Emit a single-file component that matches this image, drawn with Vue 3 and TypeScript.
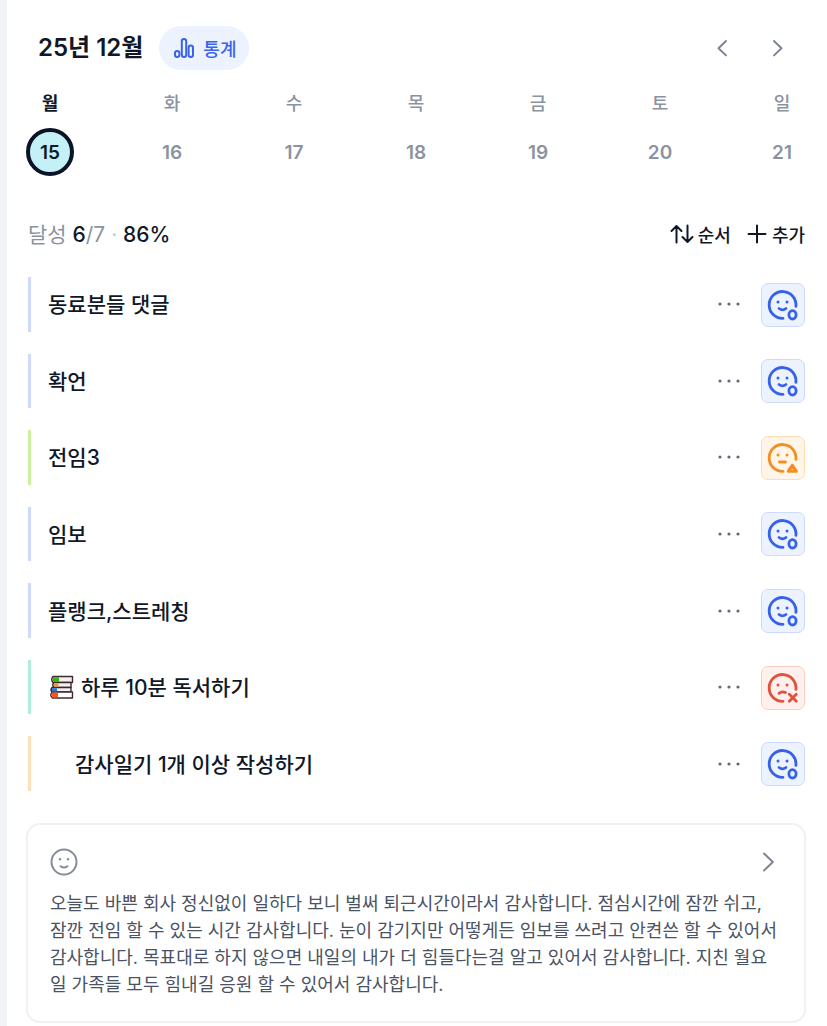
<script setup lang="ts">
type Mood = 'good' | 'soso' | 'bad'

interface Day {
  label: string
  date: number
  selected?: boolean
}

interface Habit {
  title: string
  tone: 'blue' | 'lime' | 'mint' | 'orange'
  mood: Mood
  books?: boolean
  indented?: boolean
}

const days: Day[] = [
  { label: '월', date: 15, selected: true },
  { label: '화', date: 16 },
  { label: '수', date: 17 },
  { label: '목', date: 18 },
  { label: '금', date: 19 },
  { label: '토', date: 20 },
  { label: '일', date: 21 },
]

const habits: Habit[] = [
  { title: '동료분들 댓글', tone: 'blue', mood: 'good' },
  { title: '확언', tone: 'blue', mood: 'good' },
  { title: '전임3', tone: 'lime', mood: 'soso' },
  { title: '임보', tone: 'blue', mood: 'good' },
  { title: '플랭크,스트레칭', tone: 'blue', mood: 'good' },
  { title: '하루 10분 독서하기', tone: 'mint', mood: 'bad', books: true },
  { title: '감사일기 1개 이상 작성하기', tone: 'orange', mood: 'good', indented: true },
]

const moodNames: Record<Mood, string> = { good: '달성', soso: '부분 달성', bad: '미달성' }
</script>

<template>
  <main class="page">
    <header class="top">
      <h1>25년 12월</h1>
      <button class="stats" type="button">
        <svg width="20" height="20" viewBox="0 0 20 20" fill="none" stroke="currentColor" stroke-width="2">
          <rect x="1" y="13" width="4.4" height="6" rx="2.2" />
          <rect x="7.8" y="1" width="4.4" height="18" rx="2.2" />
          <rect x="14.6" y="7.5" width="4.4" height="11.5" rx="2.2" />
        </svg>
        <span>통계</span>
      </button>
      <nav class="pager">
        <button type="button" aria-label="이전 주">
          <svg width="24" height="24" viewBox="0 0 24 24"><path d="M16 5 L8.5 12.2 L16 19.4" /></svg>
        </button>
        <button type="button" aria-label="다음 주">
          <svg width="24" height="24" viewBox="0 0 24 24"><path d="M8 5 L15.5 12.2 L8 19.4" /></svg>
        </button>
      </nav>
    </header>

    <div class="week">
      <button v-for="day in days" :key="day.date" type="button" class="day" :class="{ selected: day.selected }">
        <span class="name">{{ day.label }}</span>
        <span class="date">{{ day.date }}</span>
      </button>
    </div>

    <section class="summary">
      <p class="progress">달성 <b>6</b>/7 <i>·</i> <b>86%</b></p>
      <div class="actions">
        <button type="button">
          <svg width="24" height="22" viewBox="0 0 24 22"><path d="M6.5 19.5V3M1.5 8L6.5 3L11.5 8M17.5 2.5V19M12.5 14L17.5 19L22.5 14" /></svg>
          <span>순서</span>
        </button>
        <button type="button" class="add">
          <svg width="20" height="22" viewBox="0 0 20 22"><path d="M10 2.5V19.5M1.5 11H18.5" /></svg>
          <span>추가</span>
        </button>
      </div>
    </section>

    <ul class="habits">
      <li v-for="habit in habits" :key="habit.title" :class="habit.tone">
        <svg v-if="habit.books" class="books" width="25" height="24" viewBox="0 0 25 24">
          <g stroke="#40282c" stroke-width="1.4" stroke-linejoin="round">
            <path d="M4 1.5H23.5V7.5H4Q1.5 4.5 4 1.5Z" fill="#f2f0f0" />
            <path d="M5 7.5H22V12.5H5Q2.5 10 5 7.5Z" fill="#f2f0f0" />
            <path d="M3 12.5H22V17H3Q1 15 3 12.5Z" fill="#f2f0f0" />
            <path d="M3.5 17H23.5V23H3.5Q0 20 3.5 17Z" fill="#ffffff" />
          </g>
          <path d="M4 2.2H10V6.9H4Z" fill="#34b611" />
          <path d="M5 8.2H9.5V11.8H5Z" fill="#e8964b" />
          <path d="M3 13.2H8V16.4H3Z" fill="#2878e0" />
          <path d="M3 17.7H9V22.3H3Z" fill="#ff5417" />
        </svg>
        <span class="title" :class="{ indented: habit.indented }">{{ habit.title }}</span>
        <button class="more" type="button" :aria-label="habit.title + ' 더보기'">
          <svg width="24" height="6" viewBox="0 0 24 6" fill="#626b7b">
            <circle cx="3" cy="3" r="1.6" /><circle cx="12" cy="3" r="1.6" /><circle cx="21" cy="3" r="1.6" />
          </svg>
        </button>
        <button class="face" :class="habit.mood" type="button" :aria-label="moodNames[habit.mood]">
          <svg width="34" height="34" viewBox="0 -1 34 34" fill="none" stroke="currentColor" stroke-width="2.8" stroke-linecap="round">
            <path d="M29.9 17.4A13.4 13.4 0 1 0 17 29.3" />
            <circle cx="12" cy="13" r="1.5" fill="currentColor" stroke="none" />
            <circle cx="21" cy="13" r="1.5" fill="currentColor" stroke="none" />
            <template v-if="habit.mood === 'good'">
              <path d="M13 19.5Q16.500 22.200 20 19.5" />
              <ellipse cx="26.500" cy="25.800" rx="3.600" ry="4.200" />
            </template>
            <template v-else-if="habit.mood === 'soso'">
              <path d="M13.500 20H19.500" />
              <path d="M26.300 23.300L30.300 29.200H22.300Z" stroke-width="3" stroke-linejoin="round" />
            </template>
            <template v-else>
              <path d="M13 21.300Q16 18.800 19.500 20.500" />
              <path d="M23.300 22.300L30.300 29.300M30.300 22.300L23.300 29.300" />
            </template>
          </svg>
        </button>
      </li>
    </ul>

    <article class="diary">
      <header>
        <svg width="28" height="28" viewBox="0 0 28 28" fill="none" stroke="#858c99" stroke-width="2" stroke-linecap="round">
          <circle cx="14" cy="14" r="12.5" />
          <path d="M10.500 18.200Q14 20.800 17.500 18.200" />
          <circle cx="10" cy="11.200" r="1.200" fill="#858c99" stroke="none" />
          <circle cx="18" cy="11.200" r="1.200" fill="#858c99" stroke="none" />
        </svg>
        <button type="button" aria-label="일기 열기">
          <svg width="28" height="28" viewBox="0 0 28 28"><path d="M10 5.500L18.800 14L10 22.500" /></svg>
        </button>
      </header>
      <p>오늘도 바쁜 회사 정신없이 일하다 보니 벌써 퇴근시간이라서 감사합니다. 점심시간에 잠깐 쉬고, 잠깐 전임 할 수 있는 시간 감사합니다. 눈이 감기지만 어떻게든 임보를 쓰려고 안켠쓴 할 수 있어서 감사합니다. 목표대로 하지 않으면 내일의 내가 더 힘들다는걸 알고 있어서 감사합니다. 지친 월요일 가족들 모두 힘내길 응원 할 수 있어서 감사합니다.</p>
    </article>
  </main>
</template>

<style>
body {
  background: #fff;
}
</style>

<style scoped>
.page {
  box-sizing: border-box;
  min-height: 100vh;
  padding: 26px 21px 3px 19px;
  border-left: 7px solid #f2f3f5;
  color: #101828;
  font-family: Inter, "Noto Sans CJK KR", sans-serif;
}
button {
  display: flex;
  align-items: center;
  justify-content: center;
  padding: 0;
  border: 0;
  background: none;
  color: inherit;
  font: inherit;
  cursor: pointer;
}
svg {
  display: block;
  flex: none;
}
.top {
  display: flex;
  align-items: center;
  height: 44px;
  padding-left: 12px;
}
h1 {
  margin: 0;
  font-size: 24px;
  line-height: 32px;
  font-weight: 600;
}
.stats {
  gap: 9px;
  height: 44px;
  margin-left: 16px;
  padding: 0 13px 0 15px;
  border-radius: 22px;
  background: #edf2ff;
  color: #3b63e8;
  font-size: 18px;
  font-weight: 500;
}
.pager {
  display: flex;
  gap: 32px;
  margin-left: auto;
  padding-right: 16px;
}
.pager path,
.diary button path {
  fill: none;
  stroke: #7d8594;
  stroke-width: 2;
  stroke-linecap: round;
  stroke-linejoin: round;
}
.week {
  display: flex;
  justify-content: space-between;
  margin-top: 21px;
}
.day {
  flex-direction: column;
  gap: 11px;
  width: 48px;
  color: #8b93a1;
  font-weight: 500;
}
.name {
  font-size: 18px;
  line-height: 26px;
}
.date {
  box-sizing: border-box;
  width: 48px;
  height: 48px;
  border: 4px solid transparent;
  border-radius: 50%;
  font-size: 19px;
  line-height: 41px;
  font-weight: 600;
}
.day.selected {
  color: #101828;
}
.selected .name {
  font-weight: 600;
}
.selected .date {
  border-color: #0b1326;
  background: #c3f1f5;
}
.summary {
  display: flex;
  align-items: center;
  justify-content: space-between;
  margin-top: 43px;
  padding: 0 1px 0 2px;
}
.progress {
  margin: 0;
  color: #8b93a1;
  font-size: 21px;
  line-height: 32px;
}
.progress b {
  color: #101828;
  font-weight: 500;
}
.progress i {
  color: #c5cad2;
  font-style: normal;
}
.actions {
  display: flex;
  gap: 16px;
  padding-bottom: 2px;
  font-size: 18px;
  font-weight: 500;
}
.actions button {
  gap: 4px;
}
.actions .add {
  gap: 5px;
}
.actions path {
  fill: none;
  stroke: #101828;
  stroke-width: 2;
  stroke-linecap: round;
  stroke-linejoin: round;
}
.habits {
  display: grid;
  grid-auto-rows: 1fr;
  gap: 22px;
  min-height: 514px;
  margin: 26px 0 0;
  padding: 0 0 0 2px;
  list-style: none;
}
.habits li {
  display: flex;
  align-items: center;
  border-left: 3px solid #cddafd;
  padding-left: 17px;
}
.habits .lime {
  border-color: #cdef9f;
}
.habits .mint {
  border-color: #aeeedb;
}
.habits .orange {
  border-color: #ffe0bb;
}
.title {
  flex: 1;
  padding-top: 2px;
  font-size: 21px;
  line-height: 30px;
  font-weight: 500;
}
.title.indented {
  padding-left: 27px;
}
.books {
  margin: 0 7px 0 1px;
}
.more {
  width: 44px;
  height: 44px;
}
.face {
  box-sizing: border-box;
  width: 44px;
  height: 44px;
  margin: 1px 1px 0 10px;
  border: 1px solid #cddafd;
  border-radius: 7px;
  background: #edf2ff;
  color: #3661ea;
}
.face.soso {
  border-color: #ffddb0;
  background: #fff5e8;
  color: #f28e24;
}
.face.bad {
  border-color: #fccdc6;
  background: #ffefed;
  color: #e0523d;
}
.diary {
  margin-top: 32px;
  padding: 23px 22px;
  border: 2px solid #f0f1f3;
  border-radius: 14px;
}
.diary header {
  display: flex;
  justify-content: space-between;
  margin-bottom: 14px;
}
.diary p {
  margin: 0;
  color: #4a5364;
  font-size: 18px;
  line-height: 27px;
}
</style>
